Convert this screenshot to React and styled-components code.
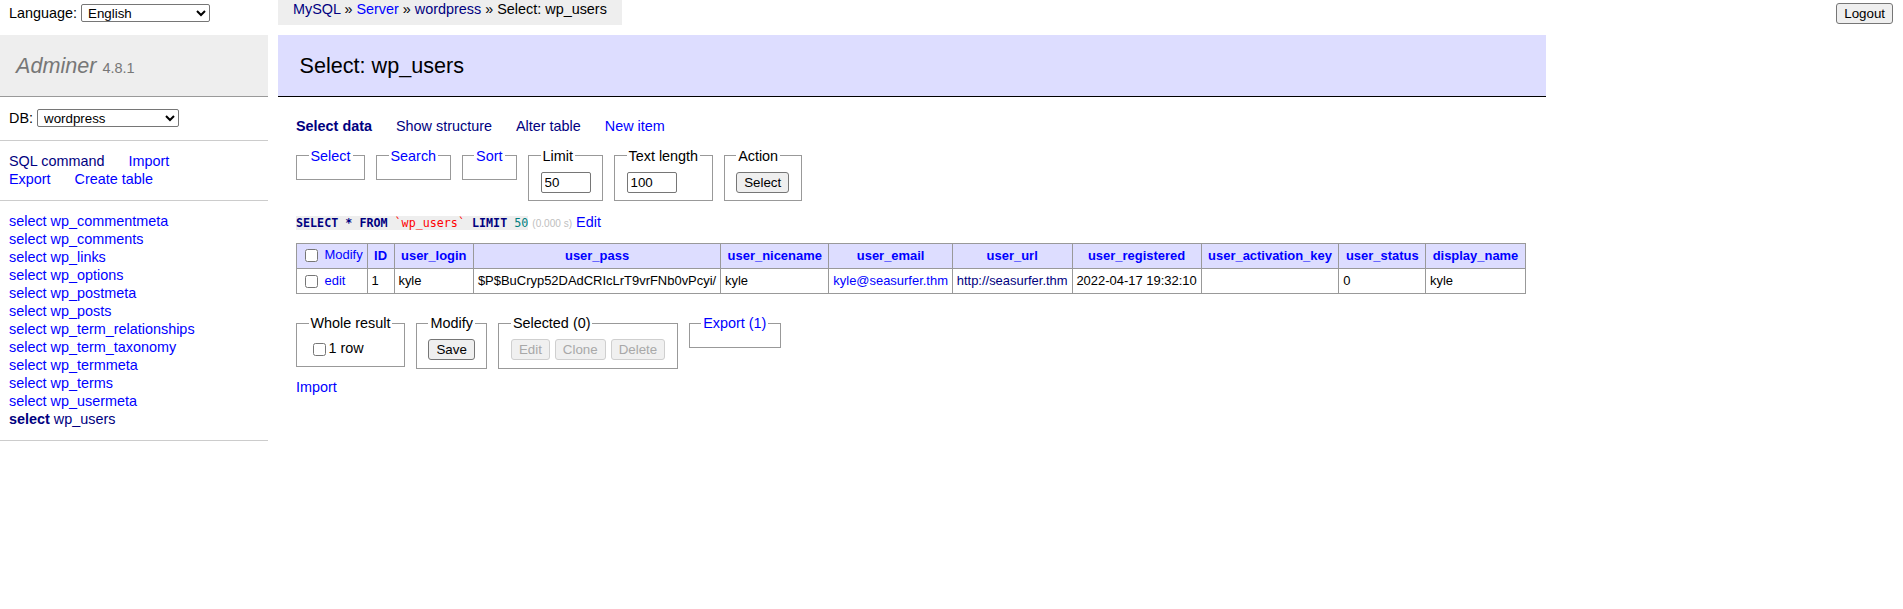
import React from "react";
import styled, { createGlobalStyle } from "styled-components";

const GlobalStyle = createGlobalStyle`
  html, body {
    margin: 0;
    padding: 0;
    background: #fff;
  }
  body {
    color: #000;
    font: 14.4px/18px "Liberation Sans", Arial, Helvetica, sans-serif;
  }
`;

const Page = styled.div`
  display: flex;
  align-items: flex-start;
  width: 1903px;
  min-height: 609px;
`;

const Link = styled.a`
  color: ${(p) => (p.$visited ? "#000080" : "#0000ff")};
  font-weight: ${(p) => (p.$active ? "bold" : "inherit")};
  text-decoration: none;
  cursor: pointer;
`;

/* ---------- left menu ---------- */

const Menu = styled.div`
  width: 268px;
  flex: none;
`;

const LangBar = styled.div`
  display: flex;
  align-items: center;
  gap: 4px;
  height: 18px;
  padding: 4px 9px 13px;
`;

const NativeSelect = styled.select`
  width: ${(p) => p.$width}px;
  height: 18px;
  font: 13.33px "Liberation Sans", Arial, sans-serif;
  color: #000;
  background: #fff;
  border: 1px solid #767676;
  border-radius: 2px;
  padding: 0 0 0 2px;
`;

const Brand = styled.h1`
  margin: 0;
  padding: 17px 16px;
  font-size: 21.6px;
  line-height: 27px;
  font-weight: normal;
  font-style: italic;
  color: #777;
  background: #eee;
  border-bottom: 1px solid #999;
`;

const Version = styled.span`
  font-style: normal;
  font-size: 14.5px;
  line-height: 1;
`;

const MenuSection = styled.div`
  padding: 11.5px 9px;
  border-bottom: 1px solid #ccc;
`;

const DbRow = styled.div`
  display: flex;
  align-items: center;
  gap: 4px;
  height: 19.5px;
`;

const LinkLine = styled.div`
  display: flex;
  gap: 24px;
  height: 18px;
  white-space: nowrap;
`;

const TableList = styled.ul`
  margin: 0;
  padding: 11.5px 9px;
  list-style: none;
  border-bottom: 1px solid #ccc;
  white-space: nowrap;
`;

/* ---------- content ---------- */

const Content = styled.div`
  flex: none;
  margin-left: 10px;
  padding: 0 0 20px 18px;
`;

const Breadcrumb = styled.div`
  width: fit-content;
  height: 25px;
  margin-left: -18px;
  padding: 0 15px;
  background: #eee;
  white-space: nowrap;
`;

const Heading = styled.h2`
  margin: 10px 0 20px -18px;
  padding: 17px 21.6px;
  font-size: 21.6px;
  line-height: 27px;
  font-weight: normal;
  color: #000;
  background: #ddf;
  border-bottom: 1px solid #000;
`;

const TabLinks = styled.div`
  display: flex;
  gap: 24px;
  white-space: nowrap;
`;

const FieldsetRow = styled.div`
  display: flex;
  align-items: flex-start;
  gap: 11px;
  margin-top: ${(p) => p.$top}px;
`;

const Box = styled.fieldset`
  margin: 0;
  padding: 7.2px 11.5px;
  border: 1px solid #999;
  min-width: 0;
  white-space: nowrap;
`;

const Legend = styled.legend`
  padding: 0 2px;
  line-height: 18px;
`;

const TextInput = styled.input`
  box-sizing: border-box;
  width: 50px;
  height: 21px;
  padding: 1px 3px;
  border: 1px solid #767676;
  border-radius: 2px;
  font: 13.33px "Liberation Sans", Arial, sans-serif;
  color: #000;
  vertical-align: middle;
`;

const Button = styled.button`
  padding: 2px 7px;
  font: 13.33px "Liberation Sans", Arial, sans-serif;
  color: #000;
  background: #efefef;
  border: 1px solid #767676;
  border-radius: 3px;
  vertical-align: middle;

  &:disabled {
    color: #a8a8a8;
    background: #f0f0f0;
    border-color: #cfcfcf;
  }
`;

const ButtonGroup = styled.div`
  display: flex;
  gap: 5px;
`;

const Check = styled.input.attrs({ type: "checkbox" })`
  width: 13px;
  height: 13px;
  margin: 3px 3px 3px 4px;
  vertical-align: middle;
`;

const SqlLine = styled.p`
  margin: 12px 0 0;
  white-space: nowrap;
`;

const Code = styled.code`
  font: 11.7px "DejaVu Sans Mono", "Liberation Mono", monospace;
  background: #eee;
`;

const Kw = styled.span`
  color: #000080;
  font-weight: bold;
`;

const Ident = styled.span`
  color: red;
`;

const Num = styled.span`
  color: #008080;
`;

const Time = styled.span`
  color: silver;
  font-size: 10.08px;
`;

const Grid = styled.table`
  margin: 10px 20px 0 0;
  border-collapse: collapse;
  font-size: 12.96px;
  line-height: 16.2px;
  white-space: nowrap;
`;

const HeadCell = styled.th`
  padding: 2.6px 6.5px;
  border: 1px solid #999;
  background: #ddf;
  text-align: center;
  font-weight: bold;
`;

const Cell = styled.td`
  padding: 2.6px 3.9px;
  border: 1px solid #999;
  background: ${(p) => (p.$head ? "#ddf" : "#fff")};
  text-align: left;
`;

const BottomLink = styled.p`
  margin: 9px 0 0;
`;

const TopRight = styled.div`
  flex: 1;
  display: flex;
  justify-content: flex-end;
  padding: 3px 10px 0 0;
`;

const tables = [
  "wp_commentmeta",
  "wp_comments",
  "wp_links",
  "wp_options",
  "wp_postmeta",
  "wp_posts",
  "wp_term_relationships",
  "wp_term_taxonomy",
  "wp_termmeta",
  "wp_terms",
  "wp_usermeta",
];

const columns = [
  "ID",
  "user_login",
  "user_pass",
  "user_nicename",
  "user_email",
  "user_url",
  "user_registered",
  "user_activation_key",
  "user_status",
  "display_name",
];

const row = [
  { text: "1" },
  { text: "kyle" },
  { text: "$P$BuCryp52DAdCRIcLrT9vrFNb0vPcyi/" },
  { text: "kyle" },
  { text: "kyle@seasurfer.thm", link: "blue" },
  { text: "http://seasurfer.thm", link: "navy" },
  { text: "2022-04-17 19:32:10" },
  { text: "" },
  { text: "0" },
  { text: "kyle" },
];

const App = () => {
  return (
    <>
      <GlobalStyle />
      <Page>
        <Menu>
          <LangBar>
            Language:
            <NativeSelect $width={129} defaultValue="en">
              <option value="en">English</option>
            </NativeSelect>
          </LangBar>
          <Brand>
            Adminer <Version>4.8.1</Version>
          </Brand>
          <MenuSection>
            <DbRow>
              DB:
              <NativeSelect $width={142} defaultValue="wordpress">
                <option value="wordpress">wordpress</option>
              </NativeSelect>
            </DbRow>
          </MenuSection>
          <MenuSection>
            <LinkLine>
              <Link $visited>SQL command</Link>
              <Link>Import</Link>
            </LinkLine>
            <LinkLine>
              <Link>Export</Link>
              <Link>Create table</Link>
            </LinkLine>
          </MenuSection>
          <TableList>
            {tables.map((t) => (
              <li key={t}>
                <Link>select {t}</Link>
              </li>
            ))}
            <li>
              <Link $visited $active>
                select
              </Link>{" "}
              <Link $visited>wp_users</Link>
            </li>
          </TableList>
        </Menu>

        <Content>
          <Breadcrumb>
            <Link $visited>MySQL</Link> » <Link>Server</Link> »{" "}
            <Link $visited>wordpress</Link> » Select: wp_users
          </Breadcrumb>
          <Heading>Select: wp_users</Heading>
          <TabLinks>
            <Link $visited $active>
              Select data
            </Link>
            <Link $visited>Show structure</Link>
            <Link $visited>Alter table</Link>
            <Link>New item</Link>
          </TabLinks>

          <FieldsetRow $top={11.5}>
            <Box>
              <Legend>
                <Link>Select</Link>
              </Legend>
            </Box>
            <Box>
              <Legend>
                <Link>Search</Link>
              </Legend>
            </Box>
            <Box>
              <Legend>
                <Link>Sort</Link>
              </Legend>
            </Box>
            <Box>
              <Legend>Limit</Legend>
              <TextInput defaultValue="50" />
            </Box>
            <Box>
              <Legend>Text length</Legend>
              <TextInput defaultValue="100" />
            </Box>
            <Box>
              <Legend>Action</Legend>
              <Button>Select</Button>
            </Box>
          </FieldsetRow>

          <SqlLine>
            <Code>
              <Kw>SELECT</Kw> <Kw>*</Kw> <Kw>FROM</Kw>{" "}
              <Ident>`wp_users`</Ident> <Kw>LIMIT</Kw> <Num>50</Num>
            </Code>{" "}
            <Time>(0.000 s)</Time> <Link>Edit</Link>
          </SqlLine>

          <Grid>
            <thead>
              <tr>
                <Cell $head>
                  <Check />
                  {" "}
                  <Link>Modify</Link>
                </Cell>
                {columns.map((c) => (
                  <HeadCell key={c}>
                    <Link>{c}</Link>
                  </HeadCell>
                ))}
              </tr>
            </thead>
            <tbody>
              <tr>
                <Cell>
                  <Check />
                  {" "}
                  <Link>edit</Link>
                </Cell>
                {row.map((c, i) => (
                  <Cell key={i}>
                    {c.link ? (
                      <Link $visited={c.link === "navy"}>{c.text}</Link>
                    ) : (
                      c.text
                    )}
                  </Cell>
                ))}
              </tr>
            </tbody>
          </Grid>

          <FieldsetRow $top={20}>
            <Box>
              <Legend>Whole result</Legend>
              <label>
                <Check />1 row
              </label>
            </Box>
            <Box>
              <Legend>Modify</Legend>
              <Button>Save</Button>
            </Box>
            <Box>
              <Legend>Selected (0)</Legend>
              <ButtonGroup>
                <Button disabled>Edit</Button>
                <Button disabled>Clone</Button>
                <Button disabled>Delete</Button>
              </ButtonGroup>
            </Box>
            <Box>
              <Legend>
                <Link>Export (1)</Link>
              </Legend>
            </Box>
          </FieldsetRow>

          <BottomLink>
            <Link>Import</Link>
          </BottomLink>
        </Content>

        <TopRight>
          <Button>Logout</Button>
        </TopRight>
      </Page>
    </>
  );
};

export default App;
